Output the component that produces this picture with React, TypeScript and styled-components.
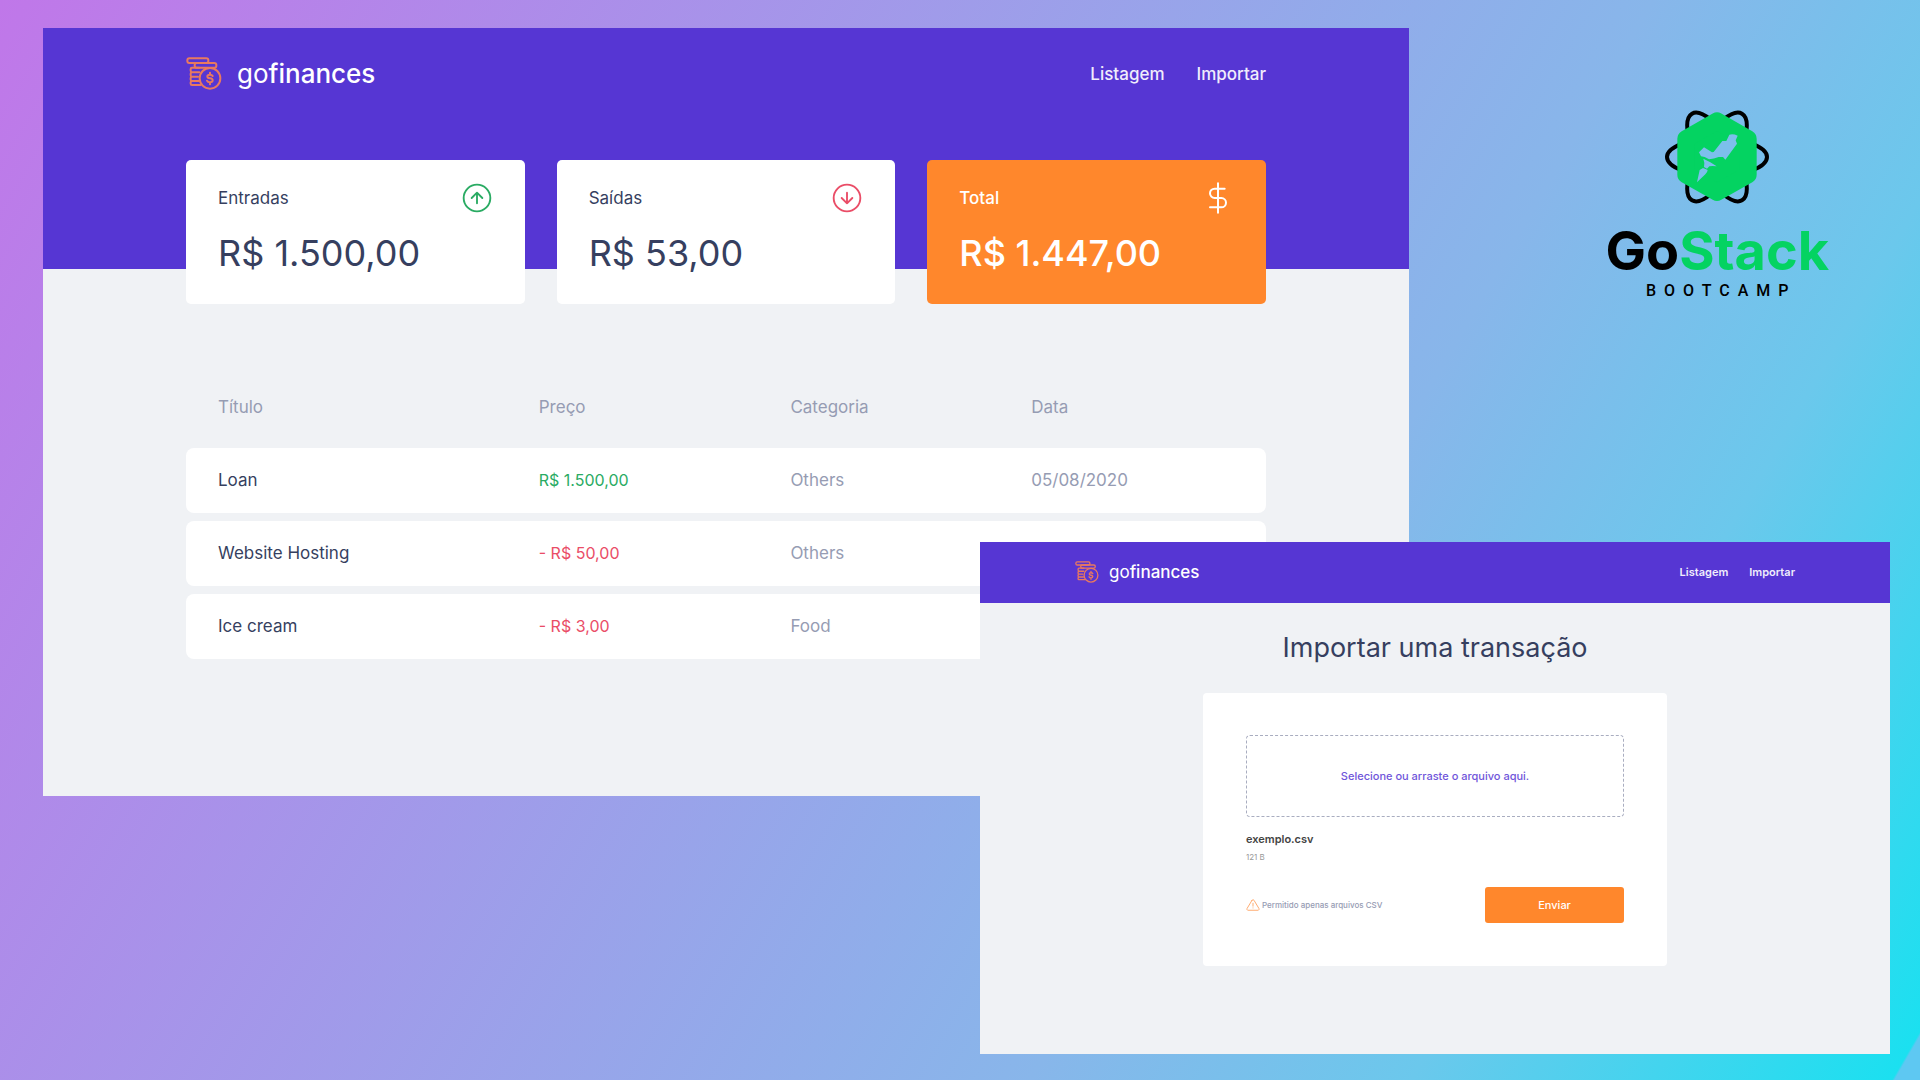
import React from 'react';
import styled, { createGlobalStyle, css } from 'styled-components';

const colors = {
  purple: '#5636d3',
  orange: '#ff872c',
  page: '#f0f2f5',
  ink: '#363f5f',
  muted: '#969cb3',
  green: '#2aab63',
  red: '#ea4d67',
  brand: '#04d361',
};

const GlobalStyle = createGlobalStyle`
  * { box-sizing: border-box; margin: 0; padding: 0; }
  body { font-family: Inter, 'Open Sans', sans-serif; color: ${colors.ink}; }
  button, input { font: inherit; }
`;

const Stage = styled.main`
  position: relative;
  min-height: 100vh;
  overflow: hidden;
  display: flex;
  justify-content: flex-end;
  align-items: flex-start;
  padding: 109px 91px;
  background: linear-gradient(120deg, #c077e9 0%, #88b6ea 65%, #6bc8ec 80%, #1be0f0 98.9%, #5ec8f2 99%);
`;

const Brand = styled.div`
  display: flex;
  flex-direction: column;
  align-items: center;
`;

const BrandName = styled.p`
  margin-top: 16px;
  font-size: 54px;
  line-height: 60px;
  font-weight: 700;
  color: #000;
  span { color: ${colors.brand}; }
`;

const BrandTag = styled.p`
  padding-left: 8px;
  font-family: Roboto, sans-serif;
  font-size: 16px;
  line-height: 20px;
  font-weight: 500;
  letter-spacing: 8px;
  color: #000;
`;

const AppWindow = styled.section<{ $front?: boolean }>`
  position: absolute;
  background: ${colors.page};
  ${({ $front }) =>
    $front
      ? css`inset: 542px 30px 26px 980px;`
      : css`inset: 28px 511px 284px 43px;`}
`;

const TopBar = styled.header<{ $compact?: boolean }>`
  background: ${colors.purple};
  padding: ${({ $compact }) => ($compact ? '19px 95px 20px' : '29px 143px 179px')};
  display: flex;
  justify-content: space-between;
  align-items: center;
`;

const Logo = styled.a<{ $compact?: boolean }>`
  display: flex;
  align-items: center;
  gap: ${({ $compact }) => ($compact ? 10 : 15)}px;
  color: #fff;
  text-decoration: none;
  font-size: ${({ $compact }) => ($compact ? 17 : 26)}px;
  line-height: ${({ $compact }) => ($compact ? 22 : 33)}px;
  b { font-weight: 500; }
  svg { width: ${({ $compact }) => ($compact ? 24 : 36)}px; height: auto; display: block; }
`;

const Nav = styled.nav<{ $compact?: boolean }>`
  display: flex;
  gap: ${({ $compact }) => ($compact ? 21 : 32)}px;
  font-size: ${({ $compact }) => ($compact ? 11 : 17)}px;
  font-weight: ${({ $compact }) => ($compact ? 600 : 500)};
  a { color: #f0edfc; text-decoration: none; }
`;

const Cards = styled.section`
  display: grid;
  grid-template-columns: repeat(3, 1fr);
  gap: 32px;
  margin: -109px 143px 0;
`;

const Card = styled.article<{ $total?: boolean }>`
  background: ${({ $total }) => ($total ? colors.orange : '#fff')};
  color: ${({ $total }) => ($total ? '#fff' : colors.ink)};
  font-weight: ${({ $total }) => ($total ? 500 : 400)};
  padding: 22px 32px;
  border-radius: 5px;
`;

const CardHead = styled.div`
  display: flex;
  justify-content: space-between;
  align-items: center;
  font-size: 17px;
  svg { display: block; }
`;

const Amount = styled.h2`
  margin-top: 12px;
  padding-bottom: 2px;
  font-size: 36px;
  line-height: 54px;
  font-weight: inherit;
`;

const TableWrap = styled.section`
  margin: 64px 143px 0;
`;

const Table = styled.table`
  width: 100%;
  table-layout: fixed;
  border-spacing: 0 8px;
  text-align: left;
  font-size: 17px;
  th, td { padding: 20px 32px; font-weight: 400; color: ${colors.muted}; }
  th { line-height: 22px; padding-bottom: 22px; }
  td { line-height: 25px; background: #fff; }
  th:nth-child(1) { width: 29.7%; }
  th:nth-child(2) { width: 23.3%; }
  th:nth-child(3) { width: 22.3%; }
  td:first-child { color: ${colors.ink}; border-radius: 8px 0 0 8px; }
  td:last-child { border-radius: 0 8px 8px 0; }
`;

const Price = styled.td<{ $income: boolean }>`
  && {
    font-size: 16px;
    color: ${({ $income }) => ($income ? colors.green : colors.red)};
  }
`;

const ImportPage = styled.div`
  display: flex;
  flex-direction: column;
  align-items: center;
  padding-top: 27px;
`;

const Title = styled.h1`
  font-size: 27px;
  line-height: 36px;
  font-weight: 400;
`;

const ImportCard = styled.form`
  width: 51%;
  margin-top: 27px;
  padding: 42px 43px 43px;
  background: #fff;
  border-radius: 4px;
`;

const DropZone = styled.label`
  position: relative;
  display: flex;
  align-items: center;
  justify-content: center;
  height: 82px;
  border: 1px dashed #a9adc0;
  border-radius: 4px;
  font-size: 11px;
  font-weight: 500;
  color: #7055da;
  cursor: pointer;
  input { position: absolute; inset: 0; opacity: 0; cursor: pointer; }
`;

const FileInfo = styled.div`
  margin-top: 13px;
  line-height: 18px;
  font-size: 8px;
  color: #999;
  strong { display: block; font-size: 11px; font-weight: 600; color: #444; }
`;

const FormFoot = styled.footer`
  margin-top: 21px;
  display: flex;
  justify-content: space-between;
  align-items: center;
`;

const Hint = styled.p`
  display: flex;
  align-items: center;
  gap: 2px;
  font-size: 8px;
  font-weight: 500;
  color: ${colors.muted};
`;

const Submit = styled.button`
  width: 139px;
  height: 36px;
  border: 0;
  border-radius: 3px;
  background: ${colors.orange};
  color: #fff;
  font-size: 11px;
  font-weight: 500;
`;

const CoinsIcon = () => (
  <svg viewBox="48 52 108 99" fill="none" stroke="#e9795f" strokeWidth="6" strokeLinejoin="round" strokeLinecap="round" aria-hidden="true">
    <rect x="52" y="56" width="63" height="14" rx="6" />
    <rect x="74" y="70" width="65" height="14" rx="6" />
    <path d="M88 84H66q-4 0-4 4v5q0 4 4 5h22M66 98q-4 0-4 4v5q0 4 4 4h18M66 111q-4 0-4 4v5q0 4 4 4h20M66 124q-4 0-4 4v4q0 4 4 4h26" />
    <circle cx="120" cy="116" r="31" />
    <path d="M128 109q-2-4-8-4-8 0-8 5.500 0 4.500 8 5.500 8 1 8 6 0 6-8 6-7 0-9-5M120 99v6m0 23v6" />
  </svg>
);

const ArrowIcon = ({ down = false }: { down?: boolean }) => (
  <svg width="32" height="32" viewBox="0 0 24 24" fill="none" stroke={down ? colors.red : colors.green} strokeWidth="1.4" strokeLinecap="round" strokeLinejoin="round" aria-hidden="true">
    <circle cx="12" cy="12" r="10" />
    <path d={down ? 'M12 8v8m-4-4 4 4 4-4' : 'M12 16V8m-4 4 4-4 4 4'} />
  </svg>
);

const DollarIcon = () => (
  <svg width="32" height="32" viewBox="0 0 24 24" fill="none" stroke="#fff" strokeWidth="1.5" strokeLinecap="round" strokeLinejoin="round" aria-hidden="true">
    <path d="M12 1v22M17 5H9.500a3.500 3.500 0 0 0 0 7h5a3.500 3.500 0 0 1 0 7H6" />
  </svg>
);

const WarningIcon = () => (
  <svg width="14" height="14" viewBox="0 0 24 24" fill="none" stroke="#ffab70" strokeWidth="1.700" strokeLinejoin="round" strokeLinecap="round" aria-hidden="true">
    <path d="M10.300 3.900 1.800 18a2 2 0 0 0 1.700 3h17a2 2 0 0 0 1.700-3L13.700 3.900a2 2 0 0 0-3.400 0zM12 9v5M12 17v.1" />
  </svg>
);

const AtomIcon = () => (
  <svg width="106" height="96" viewBox="223 56 318 288" aria-hidden="true">
    <g fill="none" stroke="#000" strokeWidth="12">
      <ellipse cx="382" cy="200" rx="150" ry="56" />
      <ellipse cx="382" cy="200" rx="150" ry="56" transform="rotate(60 382 200)" />
      <ellipse cx="382" cy="200" rx="150" ry="56" transform="rotate(120 382 200)" />
    </g>
    <path d="M382 92l93 53v108l-93 53-93-53V145z" fill={colors.brand} stroke={colors.brand} strokeWidth="52" strokeLinejoin="round" />
    <g fill="#7cbfec">
      <path d="M419 133q12-3 25 3l-6 14 4 10-35 48-7-8-13 0q-14 6-29 7l-13-7-11-2-6-12 15-15 24 15 5-1 26-33 12 0z" />
      <path d="M341 205l21 11 19 12q-14-2-22 0l-7 7-9-5 1-12z" />
      <path d="M340 233q8 3 14 6-1 8-7 13l-25 24 8-37z" />
    </g>
  </svg>
);

const Header = ({ compact = false }: { compact?: boolean }) => (
  <TopBar $compact={compact}>
    <Logo href="#" $compact={compact}>
      <CoinsIcon />
      <span>go<b>finances</b></span>
    </Logo>
    <Nav $compact={compact}>
      <a href="#listagem">Listagem</a>
      <a href="#importar">Importar</a>
    </Nav>
  </TopBar>
);

const transactions = [
  { title: 'Loan', price: 'R$ 1.500,00', income: true, category: 'Others', date: '05/08/2020' },
  { title: 'Website Hosting', price: '- R$ 50,00', income: false, category: 'Others', date: '' },
  { title: 'Ice cream', price: '- R$ 3,00', income: false, category: 'Food', date: '' },
];

export default function App() {
  return (
    <>
      <GlobalStyle />
      <Stage>
        <AppWindow>
          <Header />
          <Cards>
            <Card>
              <CardHead><p>Entradas</p><ArrowIcon /></CardHead>
              <Amount>R$ 1.500,00</Amount>
            </Card>
            <Card>
              <CardHead><p>Saídas</p><ArrowIcon down /></CardHead>
              <Amount>R$ 53,00</Amount>
            </Card>
            <Card $total>
              <CardHead><p>Total</p><DollarIcon /></CardHead>
              <Amount>R$ 1.447,00</Amount>
            </Card>
          </Cards>
          <TableWrap>
            <Table>
              <thead>
                <tr><th>Título</th><th>Preço</th><th>Categoria</th><th>Data</th></tr>
              </thead>
              <tbody>
                {transactions.map((t) => (
                  <tr key={t.title}>
                    <td>{t.title}</td>
                    <Price $income={t.income}>{t.price}</Price>
                    <td>{t.category}</td>
                    <td>{t.date}</td>
                  </tr>
                ))}
              </tbody>
            </Table>
          </TableWrap>
        </AppWindow>

        <Brand>
          <AtomIcon />
          <BrandName>Go<span>Stack</span></BrandName>
          <BrandTag>BOOTCAMP</BrandTag>
        </Brand>

        <AppWindow $front>
          <Header compact />
          <ImportPage>
            <Title>Importar uma transação</Title>
            <ImportCard onSubmit={(e) => e.preventDefault()}>
              <DropZone>
                Selecione ou arraste o arquivo aqui.
                <input type="file" accept=".csv" />
              </DropZone>
              <FileInfo>
                <strong>exemplo.csv</strong>
                121 B
              </FileInfo>
              <FormFoot>
                <Hint><WarningIcon />Permitido apenas arquivos CSV</Hint>
                <Submit type="submit">Enviar</Submit>
              </FormFoot>
            </ImportCard>
          </ImportPage>
        </AppWindow>
      </Stage>
    </>
  );
}
